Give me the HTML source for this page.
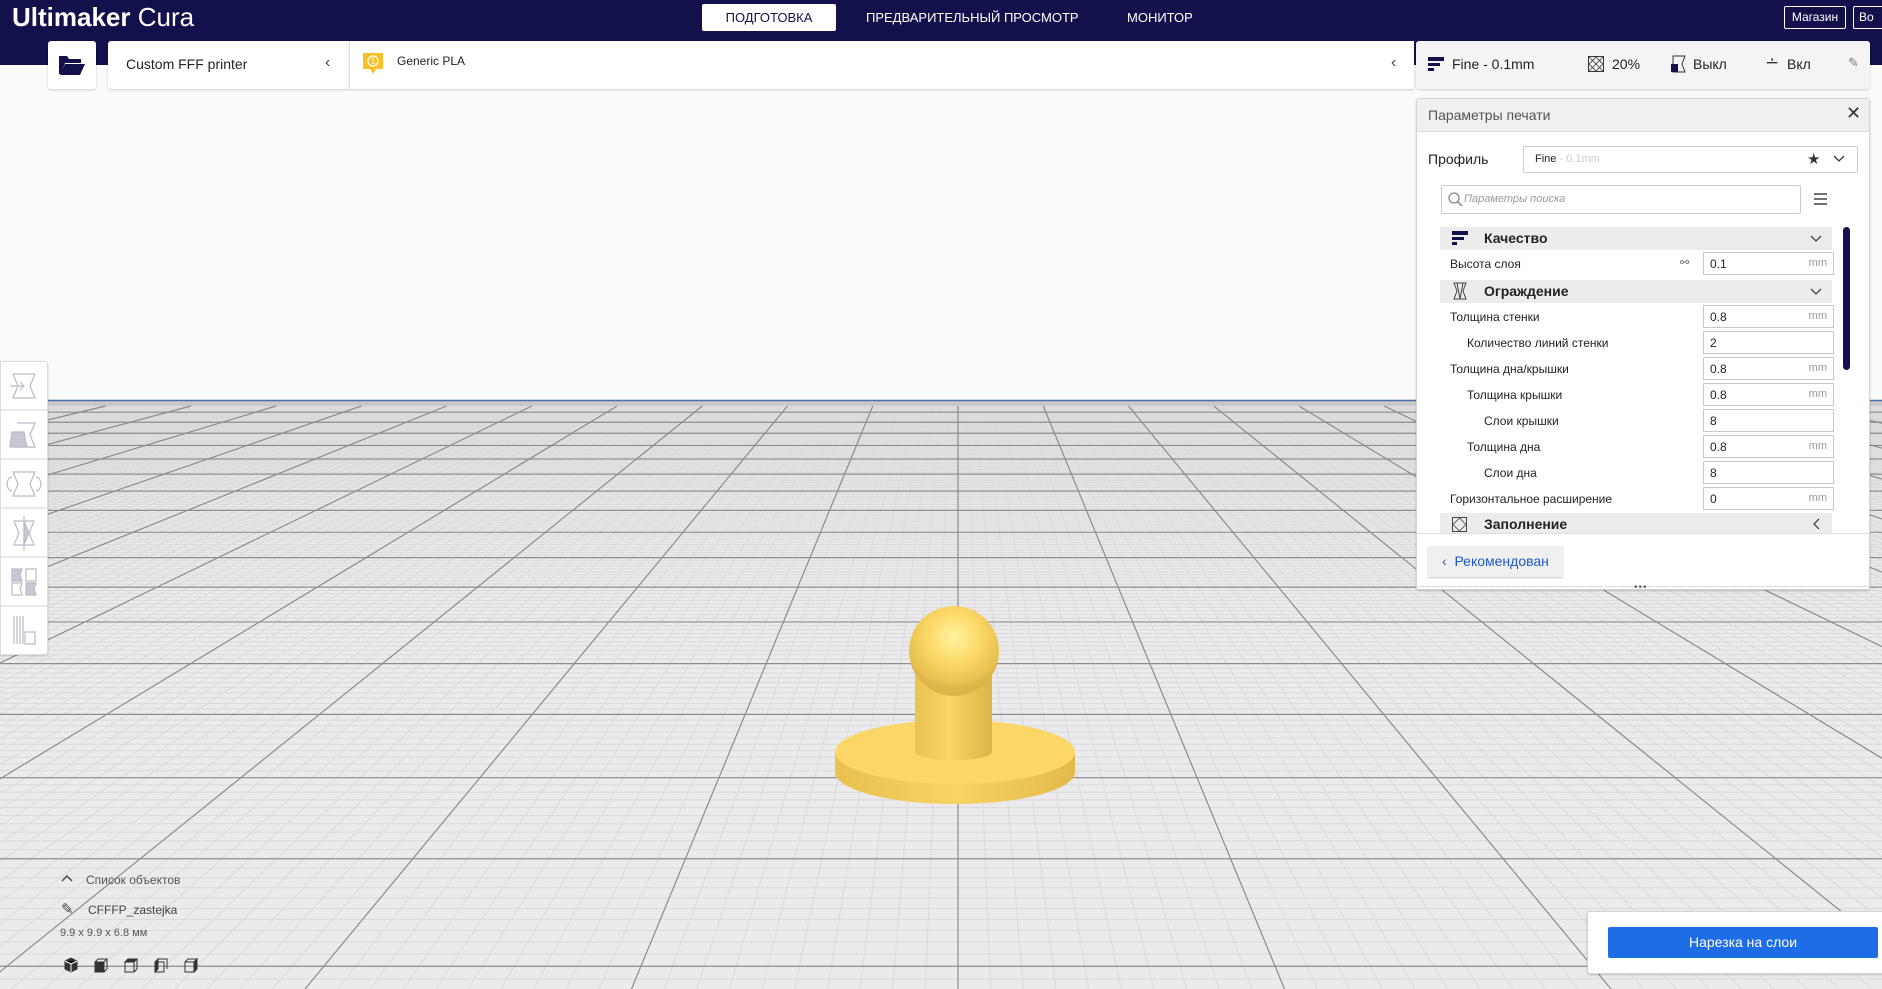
<!DOCTYPE html>
<html><head><meta charset="utf-8">
<style>
*{box-sizing:border-box;margin:0;padding:0}
body{width:1882px;height:989px;overflow:hidden;position:relative;background:#fafafa;font-family:"Liberation Sans","DejaVu Sans",sans-serif;color:#222}
.abs{position:absolute}
#hdr{left:0;top:0;width:1882px;height:65px;background:#12114c}
.card{background:#fff;border-radius:3px;box-shadow:0 1px 2px rgba(0,0,0,.18)}
.lbl{position:absolute;font-size:12px;color:#222;white-space:nowrap}
.inp{position:absolute;left:1703px;width:131px;height:23px;border:1px solid #c8c8c8;background:#fff;font-size:12px;padding:4px 0 0 6px;color:#222}
.inp span{position:absolute;right:6px;top:4px;color:#999;font-size:11px}
.cat{position:absolute;left:1440px;width:392px;height:23px;background:#ececec;font-weight:bold;font-size:14px}
.cat b{position:absolute;left:44px;top:3px}
.tb{position:absolute;left:0;width:48px;height:49px;border-bottom:1px solid #ddd}
</style></head><body>
<svg class="abs" style="left:0;top:0" width="1882" height="989" id="grid">
<rect x="0" y="401" width="1882" height="588" fill="#ebebed"/>
<rect x="0" y="401" width="1882" height="5" fill="#c9c9cc"/>
<line x1="0" y1="400.5" x2="1882" y2="400.5" stroke="#4a6ea8" stroke-width="1.5"/>
<g id="minor" stroke="#dadadd" stroke-width="1"></g>
<g id="major" stroke="#8c8c8f" stroke-width="1.2"></g>
</svg>
<script>
(function(){
var ns="http://www.w3.org/2000/svg",mi=document.getElementById('minor'),ma=document.getElementById('major');
function L(g,x1,y1,x2,y2){var l=document.createElementNS(ns,'line');l.setAttribute('x1',x1);l.setAttribute('y1',y1);l.setAttribute('x2',x2);l.setAttribute('y2',y2);g.appendChild(l);}
for(var m=-10;m<200;m++){var v=.004926-.0000213*m;if(v<=0)break;var y=200+1/v;if(y<406||y>989)continue;L(m%10==0?ma:mi,0,y,1882,y);}
for(var n=-400;n<=400;n++){var s=0.4138/10*n;var x1=958+s*206,x2=958+s*789;if(Math.max(x1,x2)<-10&&true){if(x2<0&&x1<0)continue;}if(x1>1900&&x2>1900)continue;if(x1<-10&&x2<-10)continue;L(n%10==0?ma:mi,x1,406,x2,989);}
})();
</script>
<!-- model -->
<svg class="abs" style="left:820;top:600px;left:820px" width="280" height="210">
<defs>
<linearGradient id="side" x1="0" x2="1"><stop offset="0" stop-color="#e8c150"/><stop offset=".5" stop-color="#f9d463"/><stop offset="1" stop-color="#e2ba4a"/></linearGradient>
<linearGradient id="cyl" x1="0" x2="1"><stop offset="0" stop-color="#e9c453"/><stop offset=".45" stop-color="#f8d565"/><stop offset="1" stop-color="#dcb548"/></linearGradient>
<radialGradient id="sph" cx=".5" cy=".35" r=".6"><stop offset="0" stop-color="#fff3a0"/><stop offset=".5" stop-color="#fbd865"/><stop offset="1" stop-color="#e0b84a"/></radialGradient>
</defs>
<path d="M15 152 L15 172 A120 32 0 0 0 255 172 L255 152 Z" fill="url(#side)"/>
<ellipse cx="135" cy="152" rx="120" ry="32" fill="#fcd767"/>
<path d="M95 50 L95 152 A38 8 0 0 0 172 152 L172 50 Z" fill="url(#cyl)"/>
<circle cx="134" cy="51" r="45" fill="url(#sph)"/>
<path d="M91 62 A45 45 0 0 0 178 62 A45 30 0 0 1 91 62Z" fill="#d9b347" opacity=".5"/>
</svg>
<!-- header -->
<div id="hdr" class="abs"></div>
<div class="abs" style="left:12px;top:2px;color:#fff;font-size:26px;white-space:nowrap"><b>Ultimaker</b> Cura</div>
<div class="abs" style="left:702px;top:4px;width:134px;height:27px;background:#fff;border-radius:2px;color:#12114c;font-size:13px;text-align:center;line-height:27px">ПОДГОТОВКА</div>
<div class="abs" style="left:866px;top:4px;color:#fff;font-size:13px;line-height:27px">ПРЕДВАРИТЕЛЬНЫЙ ПРОСМОТР</div>
<div class="abs" style="left:1127px;top:4px;color:#fff;font-size:13px;line-height:27px">МОНИТОР</div>
<div class="abs" style="left:1784px;top:6px;width:62px;height:23px;border:1px solid #fff;border-radius:2px;color:#fff;font-size:12px;text-align:center;line-height:21px">Магазин</div>
<div class="abs" style="left:1853px;top:6px;width:40px;height:23px;border:1px solid #fff;border-radius:2px;color:#fff;font-size:12px;padding-left:5px;line-height:21px">Во</div>
<!-- toolbar -->
<div class="abs card" style="left:48px;top:41px;width:48px;height:48px"></div>
<svg class="abs" style="left:58px;top:54px" width="28" height="22"><path d="M1 2h8l2 3h12v4H7L3 20H1z" fill="#12114c"/><path d="M7 10h20l-5 11H2z" fill="#12114c"/></svg>
<div class="abs card" style="left:108px;top:41px;width:241px;height:48px;border-radius:3px 0 0 3px"></div>
<div class="abs" style="left:126px;top:56px;font-size:14px">Custom FFF printer</div>
<div class="abs" style="left:325px;top:54px;font-size:16px;color:#444">‹</div>
<div class="abs card" style="left:349px;top:41px;width:1065px;height:48px;border-left:1px solid #ddd;border-radius:0"></div>
<svg class="abs" style="left:362px;top:52px" width="22" height="24"><path d="M1 1h20v16h-7l-3 5-3-5H1z" fill="#f6c026"/><circle cx="11" cy="9" r="5" fill="none" stroke="#fff" stroke-width="1.2"/><text x="11" y="12" font-size="8" fill="#fff" text-anchor="middle" font-family="Liberation Sans">1</text></svg>
<div class="abs" style="left:397px;top:54px;font-size:12px">Generic PLA</div>
<div class="abs" style="left:1391px;top:54px;font-size:16px;color:#444">‹</div>
<div class="abs card" style="left:1416px;top:41px;width:454px;height:48px;background:#f4f4f4"></div>
<svg class="abs" style="left:1428px;top:57px" width="18" height="16"><rect x="0" y="0" width="16" height="4" fill="#12114c"/><rect x="0" y="6" width="12" height="3" fill="#12114c"/><rect x="0" y="11" width="6" height="3" fill="#12114c"/></svg>
<div class="abs" style="left:1452px;top:56px;font-size:14px">Fine - 0.1mm</div>
<svg class="abs" style="left:1588px;top:56px" width="16" height="16"><rect x=".5" y=".5" width="15" height="15" fill="none" stroke="#333"/><path d="M1 8L8 1L15 8L8 15Z M1 1L15 15 M15 1L1 15" fill="none" stroke="#333" stroke-width=".8"/></svg>
<div class="abs" style="left:1612px;top:56px;font-size:14px">20%</div>
<svg class="abs" style="left:1670px;top:55px" width="16" height="18"><path d="M3 1h12l-3 8 3 8H3z" fill="none" stroke="#333"/><path d="M1 9h7v8H1z" fill="#12114c"/></svg>
<div class="abs" style="left:1693px;top:56px;font-size:14px">Выкл</div>
<div class="abs" style="left:1765px;top:53px;font-size:17px;color:#333">∸</div>
<div class="abs" style="left:1787px;top:56px;font-size:14px">Вкл</div>
<div class="abs" style="left:1848px;top:55px;font-size:13px;color:#777">✎</div>
<!-- settings panel -->
<div class="abs card" style="left:1416px;top:98px;width:454px;height:492px;border:1px solid #d4d4d4"></div>
<div class="abs" style="left:1417px;top:99px;width:452px;height:33px;background:#f0f0f0;border-bottom:1px solid #ddd"></div>
<div class="abs" style="left:1428px;top:107px;font-size:14px;color:#555">Параметры печати</div>
<div class="abs" style="left:1846px;top:103px;font-size:18px;font-weight:bold;color:#333">✕</div>
<div class="abs" style="left:1428px;top:151px;font-size:14px">Профиль</div>
<div class="abs" style="left:1523px;top:146px;width:335px;height:27px;border:1px solid #ccc;border-radius:2px;background:#fff"></div>
<div class="abs" style="left:1535px;top:153px;font-size:11px">Fine <span style="color:#ccc">- 0.1mm</span></div>
<div class="abs" style="left:1807px;top:150px;font-size:15px;color:#333">★</div>
<svg class="abs" style="left:1833px;top:155px" width="12" height="8"><path d="M1 1l5 5 5-5" fill="none" stroke="#333" stroke-width="1.3"/></svg>
<div class="abs" style="left:1441px;top:185px;width:360px;height:29px;border:1px solid #ccc;border-radius:2px;background:#fff"></div>
<svg class="abs" style="left:1448px;top:192px" width="15" height="15"><circle cx="6" cy="6" r="5" fill="none" stroke="#888" stroke-width="1.3"/><path d="M9.5 9.5L14 14" stroke="#888" stroke-width="1.5"/></svg>
<div class="abs" style="left:1464px;top:193px;font-size:11px;color:#999;font-style:italic">Параметры поиска</div>
<svg class="abs" style="left:1814px;top:193px" width="14" height="12"><path d="M0 1h13M0 6h13M0 11h13" stroke="#444" stroke-width="1.6"/></svg>
<div class="cat" style="top:227px"><svg class="abs" style="left:12px;top:4px" width="18" height="16"><rect width="16" height="4" fill="#12114c"/><rect y="6" width="12" height="3" fill="#12114c"/><rect y="11" width="5" height="3" fill="#12114c"/></svg><b>Качество</b><svg class="abs" style="left:370px;top:8px" width="12" height="8"><path d="M1 1l5 5 5-5" fill="none" stroke="#444" stroke-width="1.3"/></svg></div>
<div class="lbl" style="left:1450px;top:257px">Высота слоя</div>
<div class="abs" style="left:1680px;top:256px;font-size:11px;color:#666">⚯</div>
<div class="inp" style="top:252px">0.1<span>mm</span></div>
<div class="cat" style="top:280px"><svg class="abs" style="left:12px;top:2px" width="16" height="18"><path d="M2 1h12l-3 8 3 8H2l3-8z M5 1l3 16 M11 1l-3 16" fill="none" stroke="#444" stroke-width="1"/></svg><b>Ограждение</b><svg class="abs" style="left:370px;top:8px" width="12" height="8"><path d="M1 1l5 5 5-5" fill="none" stroke="#444" stroke-width="1.3"/></svg></div>
<div class="lbl" style="left:1450px;top:310px">Толщина стенки</div><div class="inp" style="top:305px">0.8<span>mm</span></div>
<div class="lbl" style="left:1467px;top:336px">Количество линий стенки</div><div class="inp" style="top:331px">2</div>
<div class="lbl" style="left:1450px;top:362px">Толщина дна/крышки</div><div class="inp" style="top:357px">0.8<span>mm</span></div>
<div class="lbl" style="left:1467px;top:388px">Толщина крышки</div><div class="inp" style="top:383px">0.8<span>mm</span></div>
<div class="lbl" style="left:1484px;top:414px">Слои крышки</div><div class="inp" style="top:409px">8</div>
<div class="lbl" style="left:1467px;top:440px">Толщина дна</div><div class="inp" style="top:435px">0.8<span>mm</span></div>
<div class="lbl" style="left:1484px;top:466px">Слои дна</div><div class="inp" style="top:461px">8</div>
<div class="lbl" style="left:1450px;top:492px">Горизонтальное расширение</div><div class="inp" style="top:487px">0<span>mm</span></div>
<div class="cat" style="top:513px;height:20px"><svg class="abs" style="left:12px;top:4px" width="16" height="16"><rect x=".5" y=".5" width="14" height="14" fill="none" stroke="#444"/><path d="M1 7.5L7.5 1L14 7.5L7.5 14Z" fill="none" stroke="#444" stroke-width=".8"/></svg><b>Заполнение</b><svg class="abs" style="left:373px;top:5px" width="8" height="12"><path d="M6 1L1 6l5 5" fill="none" stroke="#444" stroke-width="1.3"/></svg></div>
<div class="abs" style="left:1843px;top:227px;width:7px;height:143px;background:#12114c;border-radius:4px"></div>
<div class="abs" style="left:1417px;top:533px;width:452px;height:1px;background:#ddd"></div>
<div class="abs" style="left:1428px;top:546px;width:135px;height:31px;background:#f0f0f0;box-shadow:0 1px 2px rgba(0,0,0,.2)"></div>
<div class="abs" style="left:1442px;top:553px;font-size:14px;color:#1e58c8">‹&nbsp; Рекомендован</div>
<div class="abs" style="left:1417px;top:586px;width:452px;height:1px;background:#ddd"></div>
<div class="abs" style="left:1634px;top:582px;font-size:10px;color:#666;letter-spacing:1px">•••</div>
<!-- left tools -->
<div class="abs card" style="left:0;top:361px;width:48px;height:294px;border-radius:0 3px 3px 0;border:1px solid #ddd"></div>
<svg class="abs" style="left:0;top:361px" width="48" height="294" fill="none" stroke="#bbbbc8" stroke-width="1.2">
<g><path d="M13 13h22l-5 12 5 12H13l5-12z"/><path d="M10 25h14M20 21l4 4-4 4"/></g>
<line x1="0" y1="49" x2="48" y2="49" stroke="#ddd"/>
<g transform="translate(0,49)"><path d="M17 13h18l-5 12 5 12H17"/><path d="M12 22h12l3 15H10z" fill="#c8c8d4"/></g>
<line x1="0" y1="98" x2="48" y2="98" stroke="#ddd"/>
<g transform="translate(0,98)"><path d="M13 13h22l-5 12 5 12H13l5-12z"/><path d="M12 18a5 7 0 0 0 0 14M36 18a5 7 0 0 1 0 14"/></g>
<line x1="0" y1="147" x2="48" y2="147" stroke="#ddd"/>
<g transform="translate(0,147)"><path d="M14 13h20l-5 12 5 12H14l5-12z"/><path d="M24 13l5 12-5 12z" fill="#c8c8d4"/><path d="M24 8v34"/></g>
<line x1="0" y1="196" x2="48" y2="196" stroke="#ddd"/>
<g transform="translate(0,196)"><path d="M12 12h10l-2 6 2 6H12z" fill="#c8c8d4"/><path d="M26 12h10v12H26z"/><path d="M12 26h10l-2 6 2 6H12z"/><path d="M26 26h10l-2 6 2 6H26z" fill="#c8c8d4"/></g>
<line x1="0" y1="245" x2="48" y2="245" stroke="#ddd"/>
<g transform="translate(0,245)"><path d="M14 10v28M17 10v28M20 10v28M23 10v28"/><path d="M25 26h10v12H25z"/></g>
</svg>
<!-- object list -->
<svg class="abs" style="left:61px;top:874px" width="12" height="8"><path d="M1 7l5-5 5 5" fill="none" stroke="#444" stroke-width="1.4"/></svg>
<div class="abs" style="left:86px;top:873px;font-size:12px;color:#555">Список объектов</div>
<div class="abs" style="left:61px;top:900px;font-size:15px;color:#444">✎</div>
<div class="abs" style="left:88px;top:903px;font-size:12px;color:#444">CFFFP_zastejka</div>
<div class="abs" style="left:60px;top:927px;font-size:11px;color:#555">9.9 x 9.9 x 6.8 мм</div>
<svg class="abs" style="left:62px;top:956px" width="150" height="20" stroke="#333" stroke-width="1">
<path d="M3 5l6-3 6 3v8l-6 3-6-3z" fill="#333"/><path d="M3 5l6 3 6-3M9 8v8" stroke="#fff"/>
<g transform="translate(30,0)"><path d="M3 6h9v10H3z" fill="#333"/><path d="M3 6l3-3h9l-3 3M12 16l3-3V3" fill="none"/></g>
<g transform="translate(60,0)"><path d="M3 6h9v10H3z" fill="none"/><path d="M3 6l3-3h9l-3 3z" fill="#333"/><path d="M12 16l3-3V3" fill="none"/></g>
<g transform="translate(90,0)"><path d="M3 6h9v10H3z" fill="none"/><path d="M3 6l3-3v10l-3 3z" fill="#333"/><path d="M6 3h9v10" fill="none"/></g>
<g transform="translate(120,0)"><path d="M3 6h9v10H3z" fill="none"/><path d="M3 6l3-3h9l-3 3"  fill="none"/><path d="M12 6l3-3v10l-3 3z" fill="#333"/></g>
</svg>
<!-- slice -->
<div class="abs card" style="left:1587px;top:911px;width:300px;height:63px;border:1px solid #d4d4d4"></div>
<div class="abs" style="left:1608px;top:927px;width:270px;height:31px;background:#1f6de6;border-radius:2px;color:#fff;font-size:14px;text-align:center;line-height:31px">Нарезка на слои</div>
</body></html>
